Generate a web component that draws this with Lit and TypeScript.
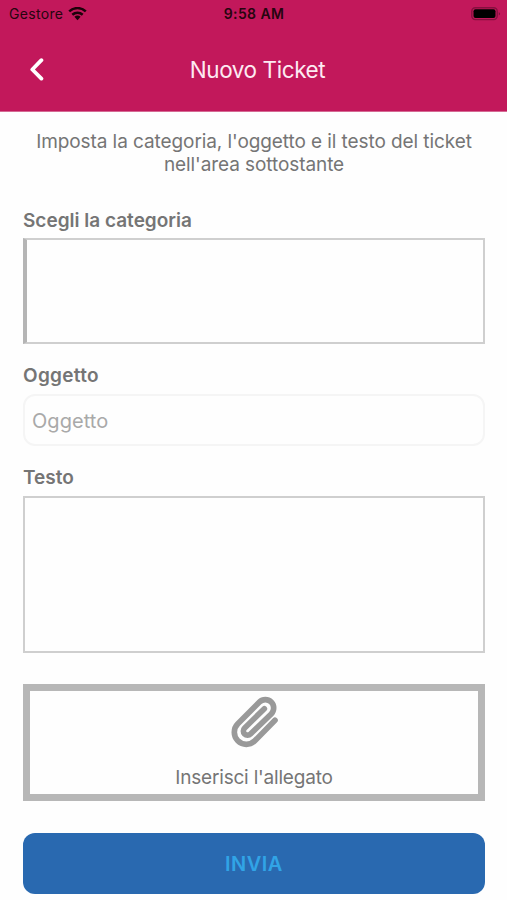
import { LitElement, html, css } from "lit";
import { customElement } from "lit/decorators.js";

@customElement("app-root")
export class AppRoot extends LitElement {
  static styles = css`
    :host {
      display: block;
      height: 900px;
      box-sizing: border-box;
      background: #fefefe;
      font-family: Inter, "Liberation Sans", sans-serif;
      color: #757575;
      overflow: hidden;
    }
    * { box-sizing: border-box; }
    svg { display: block; }
    header { height: 112px; background: #c2185b; border-bottom: 1px solid #d56a94; }
    .status {
      height: 28px;
      display: grid;
      grid-template-columns: 1fr auto 1fr;
      align-items: center;
      padding: 0 6px 0 9px;
      color: #26050f;
      font-size: 14px;
      line-height: 20px;
    }
    .carrier { display: flex; align-items: center; gap: 5px; letter-spacing: 0.32px; }
    .clock { font-weight: 600; letter-spacing: 0.4px; margin-right: 2px; }
    .battery { justify-self: end; }
    .bar {
      height: 83px;
      display: grid;
      grid-template-columns: 1fr auto 1fr;
      align-items: center;
      padding: 0 21px 0 29px;
    }
    .title { color: #fdeaf2; font-size: 22.5px; line-height: 28px; letter-spacing: -0.42px; }
    main { padding: 18px 22px 0 23px; display: flex; flex-direction: column; }
    .intro { margin: 0; text-align: center; font-size: 19px; line-height: 23px; letter-spacing: -0.08px; }
    .label { font-size: 19px; line-height: 24px; font-weight: 600; }
    .category { margin-top: 33px; }
    .subject { margin-top: 20px; letter-spacing: 0.3px; }
    .body { margin-top: 20px; }
    .picker {
      height: 106px;
      margin-top: 5px;
      border: 2px solid #cfcfcf;
      border-left: 4px solid #b5b5b5;
    }
    .input {
      height: 52px;
      margin-top: 6px;
      border: 2px solid #f5f5f5;
      border-radius: 12px;
      padding: 1px 7px 0;
      display: flex;
      align-items: center;
      font-size: 20px;
      color: #a9a9a9;
      letter-spacing: 0.05px;
    }
    .area { height: 157px; margin-top: 6px; border: 2px solid #cfcfcf; }
    .attach {
      height: 117px;
      margin-top: 31px;
      border: 7px solid #b7b7b7;
      display: flex;
      flex-direction: column;
      align-items: center;
      padding-top: 4px;
      font-size: 19px;
      line-height: 24px;
      letter-spacing: -0.2px;
    }
    .attach svg { margin-right: 1px; }
    .attach span { margin-top: 18px; }
    .send {
      height: 61px;
      margin-top: 31.5px;
      border-radius: 12px;
      background: #2969b0;
      color: #31a4e6;
      display: flex;
      align-items: center;
      justify-content: center;
      padding-top: 1px;
      font-size: 20px;
      font-weight: 600;
      letter-spacing: 0.5px;
    }
  `;

  render() {
    return html`
      <header>
        <div class="status">
          <div class="carrier">
            <span>Gestore</span>
            <svg width="19" height="14" viewBox="0 0 19 14" fill="none" stroke="#1c020a" stroke-width="2.5">
              <path d="M1.2 4.4C5.9 0 13.1 0 17.8 4.4M4.3 7.7C7.3 5 11.7 5 14.7 7.7" />
              <path d="M6.4 9.8Q9.5 7.4 12.6 9.8L9.5 13.2Z" fill="#1c020a" stroke="none" />
            </svg>
          </div>
          <div class="clock">9:58 AM</div>
          <svg class="battery" width="30" height="14" viewBox="0 0 30 14">
            <rect x=".8" y=".8" width="25.4" height="11.8" rx="3.5" fill="none" stroke="#86103f" stroke-width="1.4" />
            <rect x="2.5" y="2.3" width="22" height="8.8" rx="2" fill="#000" />
            <path d="M27.8 5Q30.2 6.8 27.8 8.6Z" fill="#78103a" />
          </svg>
        </div>
        <div class="bar">
          <svg width="16" height="24" viewBox="0 0 16 24" fill="none" stroke="#fff" stroke-width="3.8" stroke-linecap="round" stroke-linejoin="round">
            <path d="M12.4 2.2L3.3 11.5L12.4 20.6" />
          </svg>
          <div class="title">Nuovo Ticket</div>
        </div>
      </header>
      <main>
        <p class="intro">Imposta la categoria, l'oggetto e il testo del ticket<br />nell'area sottostante</p>
        <div class="label category">Scegli la categoria</div>
        <div class="picker"></div>
        <div class="label subject">Oggetto</div>
        <div class="input">Oggetto</div>
        <div class="label body">Testo</div>
        <div class="area"></div>
        <div class="attach">
          <svg width="50" height="53" viewBox="205 45 150 159" fill="none" stroke="#999" stroke-width="17" stroke-linecap="round" stroke-linejoin="round">
            <path d="M343 121L282.5 182.5A36 36 0 0 1 231.5 131.5L296.3 66.3A25 25 0 0 1 331.7 101.7L269.5 162A12.5 12.5 0 0 1 252 144L311 86" />
          </svg>
          <span>Inserisci l'allegato</span>
        </div>
        <div class="send">INVIA</div>
      </main>
    `;
  }
}
